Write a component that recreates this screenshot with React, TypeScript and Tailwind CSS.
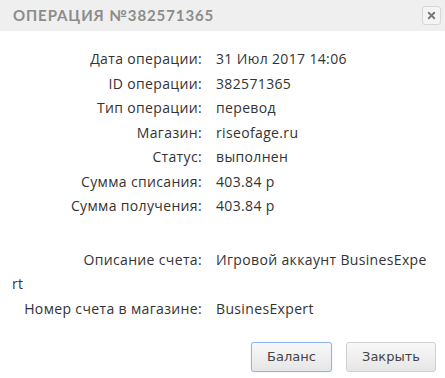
import { X } from "lucide-react";

const rows: [string, string][] = [
  ["Дата операции:", "31 Июл 2017 14:06"],
  ["ID операции:", "382571365"],
  ["Тип операции:", "перевод"],
  ["Магазин:", "riseofage.ru"],
  ["Статус:", "выполнен"],
  ["Сумма списания:", "403.84 р"],
  ["Сумма получения:", "403.84 р"],
];

function Row({ label, value }: { label: string; value: string }) {
  return (
    <div className="leading-[24.5px] break-all">
      <span className="inline-block w-[204px] text-right pr-[14px] text-[#333]">{label}</span>
      <span className="text-[#333]">{value}</span>
    </div>
  );
}

export default function App() {
  return (
    <div className="w-[445px] h-[378px] bg-white font-['Open_Sans',sans-serif] text-[14px] tracking-[0.35px]">
      {/* header */}
      <div className="h-[31px] bg-[#efefef] flex items-center justify-between pl-[13px] pr-[4px]">
        <span className="font-['Lato',sans-serif] font-bold text-[15px] tracking-[0.9px] text-[#8c8c8c]">
          ОПЕРАЦИЯ №382571365
        </span>
        <button className="w-[19px] h-[19px] rounded-[3px] border border-[#d6d6d6] bg-[#f4f4f4] flex items-center justify-center">
          <X className="size-[11px] text-[#777]" strokeWidth={4} />
        </button>
      </div>

      {/* body */}
      <div className="pl-[12px] pr-[17px] pt-[16px]">
        {rows.map(([l, v]) => (
          <Row key={l} label={l} value={v} />
        ))}
        <div className="h-[29px]" />
        <Row label="Описание счета:" value="Игровой аккаунт BusinesExpert" />
        <Row label="Номер счета в магазине:" value="BusinesExpert" />
      </div>

      {/* footer */}
      <div className="flex justify-end gap-[14px] pr-[9px] pt-[21px] font-['DejaVu_Sans',sans-serif] tracking-normal">
        <button className="w-[81px] h-[30px] rounded-[3px] border border-[#8fb4ee] bg-gradient-to-b from-[#f8f8f8] to-[#e6e6e6] text-[13px] text-[#444] shadow-[0_0_1px_#8fb4ee]">
          Баланс
        </button>
        <button className="w-[90px] h-[30px] rounded-[3px] border border-[#cfcfcf] bg-gradient-to-b from-[#f8f8f8] to-[#e6e6e6] text-[13px] text-[#444]">
          Закрыть
        </button>
      </div>
    </div>
  );
}
